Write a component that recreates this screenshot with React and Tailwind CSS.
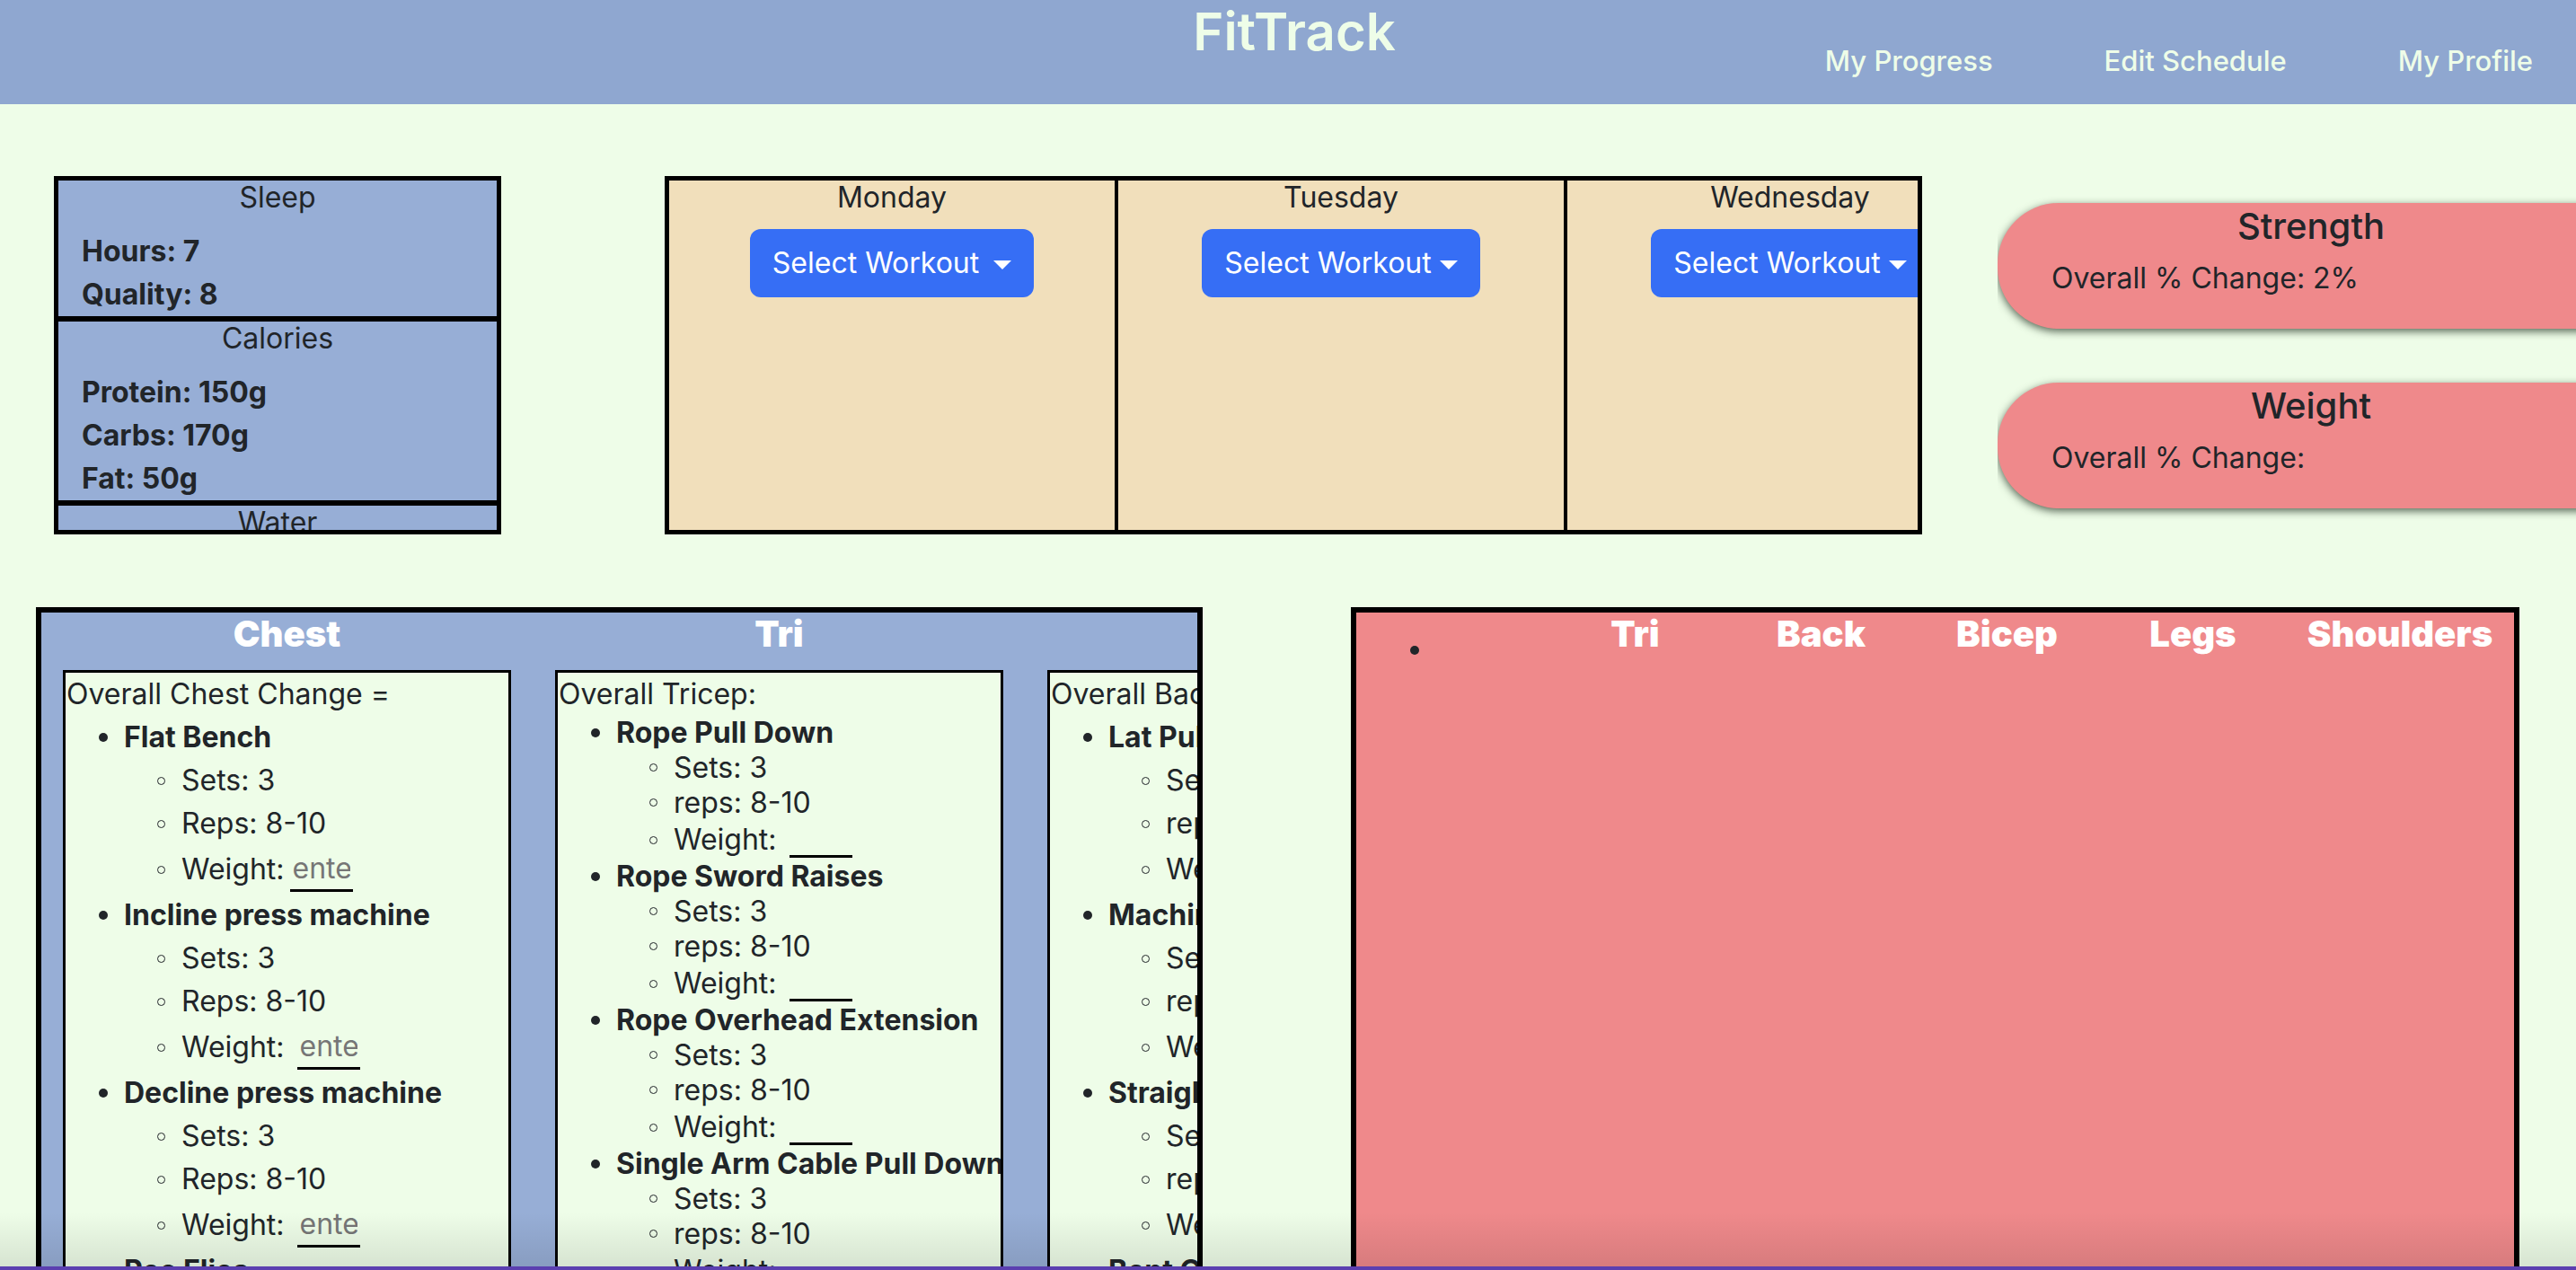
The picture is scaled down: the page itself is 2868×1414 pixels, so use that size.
// FitTrack dashboard screen

const days = ['Monday', 'Tuesday', 'Wednesday', 'Thursday', 'Friday', 'Saturday', 'Sunday'];

function Caret() {
  return (
    <span className="inline-block w-0 h-0 align-middle border-t-[10px] border-t-white border-x-[10px] border-x-transparent" />
  );
}

function DayColumn({ day, gap }) {
  return (
    <div className="w-[500px] shrink-0 border-r-[4px] border-black flex flex-col items-center">
      <div className="leading-[38px]">{day}</div>
      <button className="mt-[16px] h-[76px] px-[25px] rounded-[12px] bg-[#366ef5] text-white flex items-center leading-[48px]">
        Select Workout
        <span className={gap}>
          <Caret />
        </span>
      </button>
    </div>
  );
}

function StatSection({ title, rows, last }) {
  return (
    <div className={last ? '' : 'border-b-[6px] border-black'}>
      <div className="leading-[38px] text-center">{title}</div>
      {rows.length > 0 && (
        <div className="mt-[17px] pl-[26px] font-bold">
          {rows.map((r) => (
            <div key={r} className="leading-[48px]">{r}</div>
          ))}
        </div>
      )}
    </div>
  );
}

function PillCard({ title, text }) {
  return (
    <div className="w-[698px] h-[140px] shrink-0 bg-[#ef898b] rounded-l-[68px] shadow-[0_3px_10px_rgba(20,35,20,0.7)] pt-[2px]">
      <div className="text-center text-[40px] font-medium leading-[48px]">{title}</div>
      <div className="mt-[12px] pl-[60px] leading-[44px]">{text}</div>
    </div>
  );
}

function Disc() {
  return <span className="ml-[37px] w-[10px] h-[10px] shrink-0 rounded-full bg-[#212529]" />;
}

function Ring() {
  return <span className="ml-[102px] w-[9px] h-[9px] shrink-0 rounded-full border-[1.5px] border-[#212529]" />;
}

function Exercise({ name, reps, rows, inputGap, placeholder }) {
  const [hName, hSets, hReps, hWeight, inputH] = rows;
  return (
    <li>
      <div className={`flex items-center whitespace-nowrap ${hName}`}>
        <Disc />
        <span className="ml-[18px] font-bold">{name}</span>
      </div>
      <div className={`flex items-center whitespace-nowrap ${hSets}`}>
        <Ring />
        <span className="ml-[18px]">Sets: 3</span>
      </div>
      <div className={`flex items-center whitespace-nowrap ${hReps}`}>
        <Ring />
        <span className="ml-[18px]">{reps}: 8-10</span>
      </div>
      <div className={`flex items-center whitespace-nowrap ${hWeight}`}>
        <Ring />
        <span className="ml-[18px]">Weight:</span>
        <input
          className={`${inputGap} ${inputH} w-[70px] px-[3px] bg-transparent border-b-[3px] border-black outline-none placeholder:text-[#767676]`}
          placeholder={placeholder}
        />
      </div>
    </li>
  );
}

const wideRows = ['h-[48px]', 'h-[48px]', 'h-[48px]', 'h-[54px]', 'h-[50px]'];
const tightRows = ['h-[38px]', 'h-[39px]', 'h-[39px]', 'h-[44px]', 'h-[40px]'];

function WorkoutColumn({ title, children }) {
  return (
    <div className="w-[499px] shrink-0 flex flex-col">
      <div className="h-[64px] text-center text-white font-black text-[40px] leading-[48px]">{title}</div>
      <div className="flex-1 bg-[#eefde8] border-[3px] border-black overflow-hidden text-[#212529]">
        {children}
      </div>
    </div>
  );
}

export default function App() {
  return (
    <div className="relative w-[2868px] h-[1414px] overflow-hidden bg-[#eefde8] font-['Inter',sans-serif] text-[32px] text-[#212529]">
      {/* Header */}
      <header className="h-[116px] bg-[#8fa7d0] grid grid-cols-[1fr_auto_1fr] text-[#eefde8]">
        <div />
        <h1 className="pt-[3px] pl-[14px] text-[58px] font-semibold leading-[64px]">FitTrack</h1>
        <nav className="flex justify-end items-end gap-[124px] pr-[48px] pb-[24px] leading-[48px] text-[31px] font-medium">
          <a>My Progress</a>
          <a>Edit Schedule</a>
          <a>My Profile</a>
        </nav>
      </header>

      {/* Top row */}
      <div className="flex items-start mt-[80px] pl-[60px]">
        <div className="w-[498px] h-[399px] shrink-0 border-[5px] border-black bg-[#97aed6] overflow-hidden">
          <StatSection title="Sleep" rows={['Hours: 7', 'Quality: 8']} />
          <StatSection title="Calories" rows={['Protein: 150g', 'Carbs: 170g', 'Fat: 50g']} />
          <StatSection title="Water" rows={['Cups: 8']} last />
        </div>

        <div className="ml-[182px] w-[1400px] h-[399px] shrink-0 border-[5px] border-black bg-[#f1dfbb] overflow-hidden flex">
          {days.map((d, i) => (
            <DayColumn key={d} day={d} gap={i === 0 ? 'ml-[16px]' : 'ml-[9px]'} />
          ))}
        </div>

        <div className="ml-[84px] flex-1 overflow-hidden py-[24px] mt-[6px] flex flex-col gap-[60px]">
          <PillCard title="Strength" text="Overall % Change: 2%" />
          <PillCard title="Weight" text="Overall % Change:" />
        </div>
      </div>

      {/* Bottom row */}
      <div className="flex items-start mt-[81px] pl-[40px] gap-[165px]">
        <div className="w-[1299px] h-[760px] shrink-0 border-[6px] border-black bg-[#97aed6] overflow-hidden flex gap-[49px] pl-[24px]">
          <WorkoutColumn title="Chest">
            <div className="leading-[48px] pl-[1px] whitespace-nowrap">Overall Chest Change =</div>
            <ul>
              <Exercise name="Flat Bench" reps="Reps" rows={wideRows} inputGap="ml-[6px]" placeholder="enter weight" />
              <Exercise name="Incline press machine" reps="Reps" rows={wideRows} inputGap="ml-[14px]" placeholder="enter weight" />
              <Exercise name="Decline press machine" reps="Reps" rows={wideRows} inputGap="ml-[14px]" placeholder="enter weight" />
              <Exercise name="Pec Flies" reps="Reps" rows={wideRows} inputGap="ml-[14px]" placeholder="enter weight" />
            </ul>
          </WorkoutColumn>

          <WorkoutColumn title="Tri">
            <div className="leading-[48px] pl-[1px] whitespace-nowrap">Overall Tricep:</div>
            <ul>
              <Exercise name="Rope Pull Down" reps="reps" rows={tightRows} inputGap="ml-[14px]" />
              <Exercise name="Rope Sword Raises" reps="reps" rows={tightRows} inputGap="ml-[14px]" />
              <Exercise name="Rope Overhead Extension" reps="reps" rows={tightRows} inputGap="ml-[14px]" />
              <Exercise name="Single Arm Cable Pull Down" reps="reps" rows={tightRows} inputGap="ml-[14px]" />
            </ul>
          </WorkoutColumn>

          <WorkoutColumn title="Back">
            <div className="leading-[48px] pl-[1px] whitespace-nowrap">Overall Back Change =</div>
            <ul>
              <Exercise name="Lat Pull Down" reps="reps" rows={wideRows} inputGap="ml-[14px]" />
              <Exercise name="Machine Row" reps="reps" rows={wideRows} inputGap="ml-[14px]" />
              <Exercise name="Straight Arm Pull Down" reps="reps" rows={wideRows} inputGap="ml-[14px]" />
              <Exercise name="Bent Over Row" reps="reps" rows={wideRows} inputGap="ml-[14px]" />
            </ul>
          </WorkoutColumn>
        </div>

        <div className="w-[1301px] h-[760px] shrink-0 border-[6px] border-black bg-[#ef898b] flex">
          <div className="w-[207px] shrink-0">
            <div className="ml-[60px] mt-[37px] w-[10px] h-[10px] rounded-full bg-[#212529]" />
          </div>
          {['Tri', 'Back', 'Bicep', 'Legs'].map((t) => (
            <div key={t} className="w-[207px] shrink-0 text-center text-white font-black text-[40px] leading-[48px]">
              {t}
            </div>
          ))}
          <div className="flex-1 text-center text-white font-black text-[40px] leading-[48px]">Shoulders</div>
        </div>
      </div>

      {/* window edge */}
      <div className="absolute inset-x-0 bottom-[4px] h-[60px] bg-linear-to-b from-transparent to-black/10 pointer-events-none" />
      <div className="absolute inset-x-0 bottom-0 h-[4px] bg-[#5b3fb0]" />
    </div>
  );
}
